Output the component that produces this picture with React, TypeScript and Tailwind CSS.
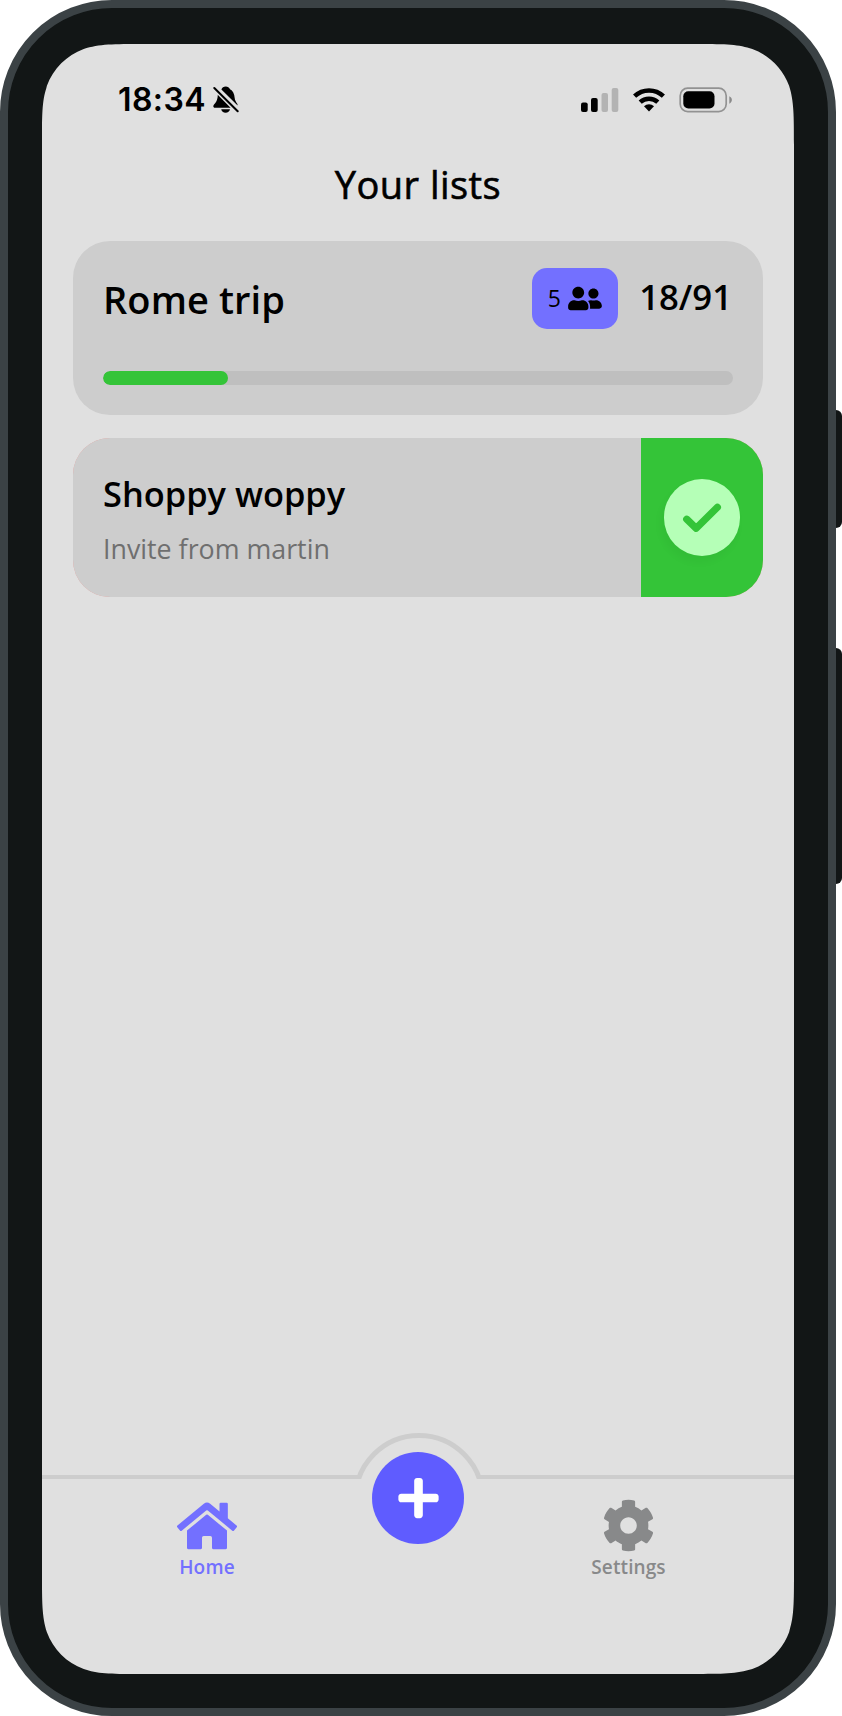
import { FaCog, FaHome, FaPlus, FaUserFriends } from "react-icons/fa";

function BellSlash() {
  return (
    <svg className="h-[28px] w-[27px]" viewBox="0 0 27 28">
      <path
        fill="#000"
        d="M12.800.6c-2.200 0-3.800 1.100-4.400 2.900L24.600 19.400c.2-2.300-2.500-3.200-2.900-7.400-.3-4.500-1.900-7.400-4.700-8.700C16.100 1.600 14.700.6 12.800.6ZM4.800 8.800 17.600 21.700H1.900C.9 21.700.3 21.100.3 20.200c0-1.300 1.600-2.300 2.700-4.200.9-1.600 1.700-3.600 1.800-7.200ZM8.200 23.300h8.800c-.4 2.100-2.100 3.500-4.400 3.500s-4-1.400-4.400-3.500Z"
      />
      <path d="M1.300 2 24.700 25.300" stroke="#e0e0e0" strokeWidth="4.200" />
      <path d="M1.300 2 24.700 25.300" stroke="#000" strokeWidth="2" strokeLinecap="round" />
    </svg>
  );
}

function StatusBar() {
  return (
    <div className="flex h-[112px] items-center justify-between pr-[61px] pl-[76px]">
      <div className="flex items-center">
        <span className="w-[95px] font-['Inter',sans-serif] text-[32px] leading-[40px] font-semibold tracking-[0.400px] text-black">
          18:34
        </span>
        <BellSlash />
      </div>
      <div className="flex items-center">
        <svg className="h-[24px] w-[38px]" viewBox="0 0 38 24">
          <rect x="0" y="14.500" width="6.700" height="9.500" rx="2" />
          <rect x="10" y="10" width="6.700" height="14" rx="2" />
          <rect x="20.500" y="5" width="6.500" height="19" rx="2" fill="#b3b3b3" />
          <rect x="30.700" y="0" width="6.600" height="24" rx="2" fill="#b3b3b3" />
        </svg>
        <svg className="ml-[14px] h-[24px] w-[32px]" viewBox="0 0 32 24">
          <g fill="none" stroke="#000" strokeWidth="4.500">
            <path d="M1.600 8.200a20.800 20.800 0 0 1 28.800 0" />
            <path d="M7.200 14.200a12.800 12.800 0 0 1 17.600 0" />
          </g>
          <path d="M11 18.200a7.600 7.600 0 0 1 10 0L16 23.600Z" />
        </svg>
        <svg className="ml-[14px] h-[26px] w-[54px]" viewBox="0 0 54 26">
          <rect x="1.200" y="1.200" width="46" height="23.400" rx="7.500" fill="none" stroke="#929292" strokeWidth="1.700" />
          <rect x="4.300" y="4.200" width="31.200" height="17.300" rx="5" />
          <path d="M50.300 9.300c3.400 1.600 3.400 5.700 0 7.400Z" fill="#8a8a8a" />
        </svg>
      </div>
    </div>
  );
}

function TripCard() {
  const progress = 18 / 91;
  return (
    <section className="h-[174px] rounded-[37px] bg-[#cdcdcd] px-[30.300px] pt-[26px]">
      <div className="flex h-[62px] items-start">
        <h2 className="flex-1 pt-[1px] text-[38px] leading-[62px] font-semibold tracking-[0.100px]">Rome trip</h2>
        <div className="mt-[0.500px] flex h-[61.500px] w-[85.500px] items-center justify-center gap-[7px] rounded-[15px] bg-[#7370ff]">
          <span className="pt-[1px] text-[23px] leading-none">5</span>
          <FaUserFriends className="h-[27px] w-[34px]" />
        </div>
        <span className="w-[115.500px] pr-[1px] text-right text-[34.700px] leading-[60px] font-semibold">18/91</span>
      </div>
      <div className="mt-[42px] h-[13.500px] overflow-hidden rounded-full bg-[#bfbfbf]">
        <div className="h-full rounded-full bg-[#34c438]" style={{ width: `${progress * 100}%` }} />
      </div>
    </section>
  );
}

function InviteCard() {
  return (
    <section className="flex h-[159px] rounded-[37px] bg-[#e89a96]">
      <div className="flex-1 rounded-l-[37px] bg-[#cdcdcd] pt-[32px] pl-[30.300px]">
        <h2 className="text-[34.400px] leading-[48px] font-semibold">Shoppy woppy</h2>
        <p className="mt-[13px] text-[26.800px] leading-[36px] text-[#6f6f6f]">Invite from martin</p>
      </div>
      <div className="flex w-[122.300px] items-center justify-center rounded-r-[37px] bg-[#34c438]">
        <button className="flex h-[76.500px] w-[76.500px] items-center justify-center rounded-full bg-[#b5ffb7] shadow-[-3px_6px_8px_rgba(0,0,0,0.04)]">
          <svg className="h-[40px] w-[40px]" viewBox="-20 -20 40 40">
            <path
              d="M-15.300 1.200-5.800 10.300 15.400-10.700"
              fill="none"
              stroke="#34c438"
              strokeWidth="7.200"
              strokeLinecap="round"
              strokeLinejoin="round"
            />
          </svg>
        </button>
      </div>
    </section>
  );
}

function TabBar() {
  return (
    <nav className="relative flex h-[199px] border-t-4 border-[#cdcdcd]">
      <div className="flex w-[330px] flex-col items-center pt-[20px] text-[#7370ff]">
        <FaHome className="h-[54px] w-[60px]" />
        <span className="mt-[1px] text-[19px] leading-[26px] font-semibold tracking-[0.200px]">Home</span>
      </div>
      <div className="flex-1" />
      <div className="flex w-[331px] flex-col items-center pt-[20px] text-[#88898a]">
        <FaCog className="h-[53px] w-[53px]" />
        <span className="mt-[2px] text-[19px] leading-[26px] font-semibold tracking-[0.100px]">Settings</span>
      </div>
      <div className="absolute -top-[46px] left-[310.500px] h-[46px] w-[132px] overflow-hidden">
        <div className="h-[132px] w-[132px] rounded-full border-[5px] border-[#cdcdcd] bg-[#e0e0e0]" />
      </div>
      <button className="absolute -top-[27px] left-[330.300px] flex h-[92px] w-[92px] items-center justify-center rounded-full bg-[#5f5cff] text-white">
        <FaPlus className="h-[46px] w-[41px]" />
      </button>
    </nav>
  );
}

export default function App() {
  return (
    <div className="flex h-[1716px] w-[842px] bg-white font-['Open_Sans',sans-serif] text-black">
      <div className="h-[1716px] w-[836px] rounded-[112px] border-8 border-[#3b4245] bg-[#121616] px-[34px] pt-[36px] pb-[34px]">
        <main className="flex h-[1630px] flex-col bg-[#e0e0e0] [clip-path:path('M100.9_0H651.1C680.2_0_694.7_0_707.8_4.300L710.3_4.900C727.4_11.200_740.8_24.600_747.1_41.700C752_57.300_752_71.800_752_100.900V1529.100C752_1558.200_752_1572.700_747.7_1585.800L747.1_1588.300C740.8_1605.400_727.4_1618.800_710.3_1625.100C694.7_1630_680.2_1630_651.1_1630H100.900C71.800_1630_57.300_1630_44.200_1625.700L41.700_1625.100C24.600_1618.800_11.200_1605.400_4.900_1588.300C0_1572.700_0_1558.200_0_1529.100V100.900C0_71.800_0_57.300_4.300_44.200L4.900_41.700C11.200_24.600_24.600_11.200_41.700_4.900C57.300_0_71.800_0_100.900_0Z')]">
          <StatusBar />
          <h1 className="-mt-[1px] h-[86px] text-center text-[38px] leading-[58px] tracking-[0.450px] [-webkit-text-stroke:0.600px_black]">
            Your lists
          </h1>
          <div className="flex flex-1 flex-col gap-[23px] px-[30.700px]">
            <TripCard />
            <InviteCard />
          </div>
          <TabBar />
        </main>
      </div>
      <div className="flex w-[6px] flex-col pt-[410px]">
        <div className="h-[118px] rounded-r-[6px] bg-[#121616]" />
        <div className="mt-[120px] h-[236px] rounded-r-[6px] bg-[#121616]" />
      </div>
    </div>
  );
}
